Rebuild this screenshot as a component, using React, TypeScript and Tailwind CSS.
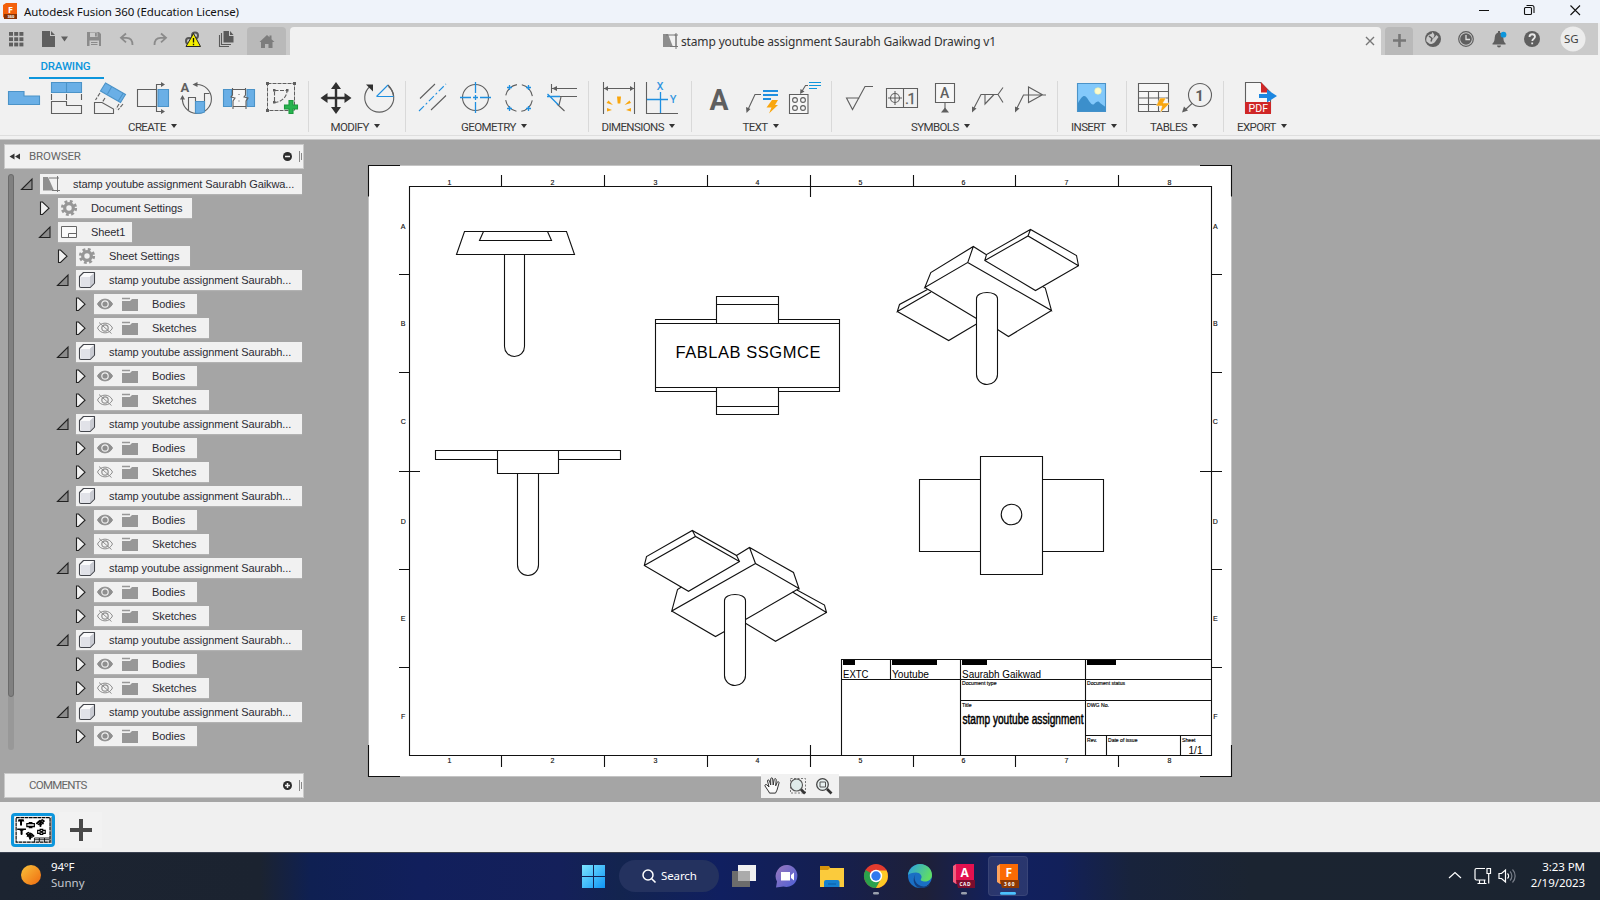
import type { ReactNode } from "react";

const K = "#5f5f5f";
const B = "#1f8fe0";
const FILL = "#6aafe6";
const EDGE = "#4b93c8";

/* Generic drawing cell; coordinates are in window space. */
function Cell({ vb, className, children }: { vb: string; className: string; children: ReactNode }) {
  return (
    <svg viewBox={vb} className={`shrink-0 ${className}`} fill="none">
      {children}
    </svg>
  );
}

function Tool({ x, children }: { x: number; children: ReactNode }) {
  return (
    <svg viewBox={`${x} 80 43 36`} className="h-9 w-[43px] shrink-0" fill="none" stroke={K} strokeWidth="1.1">
      {children}
    </svg>
  );
}

function Group({ className, row, label, name, children }: { className: string; row: string; label: string; name: string; children: ReactNode }) {
  return (
    <div className={`h-full shrink-0 ${className}`}>
      <div className={`flex ${row}`}>{children}</div>
      <div className={`mt-[4px] flex items-center gap-[5px] ${label}`}>
        <span className="text-[11.5px] leading-[14px] tracking-[-0.6px] whitespace-nowrap text-[#3a3a3a]">{name}</span>
        <Cell vb="0 0 6 4" className="h-1 w-1.5 -mt-0.5">
          <path d="M0 0h6L3 4z" fill="#333" />
        </Cell>
      </div>
    </div>
  );
}

function Sep() {
  return <div className="-mx-[0.5px] mt-[1px] h-[51px] w-px shrink-0 bg-[#d9d9d9]" />;
}

function TitleBar() {
  return (
    <header className="flex h-[23px] items-center bg-[#eff3fa]">
      <Cell vb="0 0 24 23" className="h-[23px] w-6">
        <path d="M3 5l3-2h11v16H6l-3-2z" fill="#f3600c" />
        <path d="M4 14h13v5H4z" fill="#8a3205" />
        <text x="8" y="12.5" fontSize="9" fontWeight="700" fill="#fff" fontFamily="Open Sans, sans-serif">F</text>
        <text x="7.5" y="18" fontSize="4" fontWeight="700" fill="#fff" fontFamily="Open Sans, sans-serif">360</text>
      </Cell>
      <span className="font-['Noto_Sans',sans-serif] text-[11.5px] tracking-[-0.1px] text-[#111]">Autodesk Fusion 360 (Education License)</span>
      <Cell vb="1470 0 130 23" className="ml-auto h-[23px] w-[130px]">
        <g stroke="#111" strokeWidth="1.1">
          <path d="M1479 10.5h10M1570.5 5.5l9.500 9.500M1580 5.500l-9.500 9.500" />
          <rect x="1524.500" y="7.500" width="7" height="7" rx="1" />
          <path d="M1526.500 5.500h5.500a2 2 0 0 1 2 2v5.500" />
        </g>
      </Cell>
    </header>
  );
}

function TabBar() {
  return (
    <div className="flex h-8 bg-[#cacaca]">
      <Cell vb="0 23 33 32" className="h-8 w-[33px]">
        {[32, 37.3, 42.600].map((y) => [9, 14.200, 19.400].map((x) => <rect key={`${x}-${y}`} x={x} y={y} width="4" height="3.800" fill="#5f5f5f" />))}
      </Cell>
      <Cell vb="33 23 39 32" className="h-8 w-[39px]">
        <path d="M42 31h8v5h5v11H42zM51 31l4 4h-4z" fill="#5f5f5f" />
        <path d="M61 36.500h7l-3.500 5z" fill="#5f5f5f" />
      </Cell>
      <Cell vb="72 23 39 32" className="h-8 w-[39px]">
        <path d="M87 32h12l2 2v12H87z" fill="#8b8b8b" />
        <path d="M90 32.500h7.500v4.500H90zM89.500 40.500h9.500v5.500h-9.500z" fill="#cacaca" />
        <path d="M95 33h1.800v3.500H95zM91 42h6.500v1H91zM91 44h6.500v1H91z" fill="#8b8b8b" />
      </Cell>
      <Cell vb="111 23 32 32" className="h-8 w-8">
        <path d="M126 33.500l-5 4.300 5 4.500M121.500 37.800h5c3.500 0 6 2.500 6 7.200" stroke="#8b8b8b" strokeWidth="1.800" />
      </Cell>
      <Cell vb="143 23 34 32" className="h-8 w-[34px]">
        <path d="M161 33.500l5 4.300-5 4.500M165.500 37.800h-5c-3.500 0-6 2.500-6 7.200" stroke="#8b8b8b" strokeWidth="1.800" />
      </Cell>
      <Cell vb="177 23 32 32" className="h-8 w-8">
        <circle cx="195" cy="35.500" r="3" stroke="#555" strokeWidth="2" />
        <circle cx="189" cy="41" r="3" stroke="#555" strokeWidth="2" />
        <path d="M193.500 33.500l7 13h-14.500z" fill="#f4ee00" stroke="#222" strokeWidth="1" />
        <path d="M193.500 38v4.500M193.500 43.800v1.400" stroke="#111" strokeWidth="1.300" />
      </Cell>
      <Cell vb="209 23 38 32" className="h-8 w-[38px]">
        <path d="M223.500 31h5.500v5h4.500v6.500h-10zM230 31l3.500 4H230z" fill="#5a5a5a" />
        <path d="M221.500 33v11.500h9.500M219.500 35v11.500h9.500" stroke="#5a5a5a" strokeWidth="1.100" />
      </Cell>
      <div className="mt-1 flex h-7 w-[39px] shrink-0 items-center rounded-t bg-[#b9b9b9]">
        <Cell vb="247 27 39 28" className="h-7 w-[39px]">
          <path d="M259.500 42l7.500-7 2.500 2.300V35.500h2v3.700l3 2.800h-2v6h-4v-4h-3.500v4h-4v-6z" fill="#7d7d7d" />
        </Cell>
      </div>
      <div className="mt-1 ml-1 flex h-7 w-[1091px] shrink-0 items-center rounded-t bg-[#f1f1f1]">
        <div className="w-[372px] shrink-0" />
        <Cell vb="0 0 18 18" className="h-[18px] w-[18px]">
          <path d="M1 2h5l5 13H1z" fill="#8e8e8e" />
          <path d="M4 3h10v11M8 14.500h8M14 1v16M12.500 3H16" stroke="#777" />
        </Cell>
        <span className="ml-px pt-0.5 font-['Noto_Sans',sans-serif] text-[12px] tracking-[-0.15px] whitespace-nowrap text-[#333]">stamp youtube assignment Saurabh Gaikwad Drawing v1</span>
        <Cell vb="1360 31 21 20" className="ml-auto h-5 w-[21px]">
          <path d="M1366 37l8 8M1374 37l-8 8" stroke="#777" strokeWidth="1.400" />
        </Cell>
      </div>
      <div className="mt-1 ml-1 flex h-7 w-7 shrink-0 rounded-t bg-[#b9b9b9]">
        <Cell vb="1385 27 28 28" className="h-7 w-7">
          <path d="M1393 40.500h13M1399.500 34v13" stroke="#777" strokeWidth="2.600" />
        </Cell>
      </div>
      <Cell vb="1413 23 187 32" className="h-8 w-[187px]">
        <circle cx="1433" cy="39" r="8" fill="#5f5f5f" />
        <path d="M1426.500 41.500c-1-4 1.500-7 5-7.500l1-2 2 3-1.500 4 3.500-4 2 2-3.500 5c-2.500 2.500-5.500 2.500-6.500 1z" fill="#cacaca" />
        <path d="M1429 36l3 2.500-1 3" stroke="#5f5f5f" strokeWidth="1.500" />
        <circle cx="1466" cy="39" r="7.300" stroke="#5f5f5f" strokeWidth="1.200" />
        <circle cx="1466" cy="39" r="5.800" fill="#5f5f5f" />
        <path d="M1466 35v4.500h4" stroke="#ddd" strokeWidth="1.300" />
        <path d="M1492.500 43.500c2-1.500 2-3.500 2.300-6.500.3-3 2-4.500 4.200-4.500s4 1.500 4.300 4.500c.2 3 .3 5 2.300 6.500v1h-13.100zM1497 45.500h4a2 2 0 0 1-4 0zM1498 31h2v2h-2z" fill="#5f5f5f" />
        <circle cx="1503.500" cy="34.700" r="2.900" fill="#0d96dc" />
        <circle cx="1532" cy="39" r="8" fill="#5f5f5f" />
        <path d="M1529.500 37c0-3.800 5.500-3.500 5.500-.3 0 2-2.700 2-2.700 4.300M1532.200 42.500v1.800" stroke="#e8e8e8" strokeWidth="1.800" />
        <circle cx="1573" cy="39" r="12.500" fill="#ececec" />
        <text x="1564" y="43.200" fontSize="11.500" textLength="14.500" fill="#444" fontFamily="Noto Sans, sans-serif">SG</text>
        <path d="M1599 23v32" stroke="#efefef" strokeWidth="2" />
      </Cell>
    </div>
  );
}

function Ribbon() {
  return (
    <nav className="h-[85px] border-b border-[#c8c8c8] bg-[#f1f1f1] font-[Roboto,sans-serif]">
      <div className="flex h-[25px] pl-[29px]">
        <div className="h-[24px] w-[75px] border-b-[2.500px] border-[#0d96dc] pt-[4px] pr-[2px] text-center text-[11.500px] leading-[14px] font-medium tracking-[-0.200px] text-[#0d96dc]">DRAWING</div>
      </div>
      <div className="flex h-[56px] border-b border-[#dedede]">
        <Group className="w-[308px]" row="pl-0.5" label="pl-[128px]" name="CREATE">
          <Tool x={2}>
            <path d="M8.500 91.500H24v4.500h15.500v8.500h-31z" fill={FILL} stroke={EDGE} />
          </Tool>
          <Tool x={45}>
            <path d="M51.500 82.500h30v10h-30zM66.500 82.500v10" fill={FILL} stroke={EDGE} />
            <path d="M51.500 94v6M66.500 94v6M81.500 94v6" />
            <path d="M51.500 101.500h15v4h15v8h-30z" />
          </Tool>
          <Tool x={88}>
            <path d="M105.500 83l20 11.500-5 8-20-11.500zM111.500 87l-4 7M123 93.500l-5 8" fill={FILL} stroke={EDGE} />
            <path d="M94.500 102.500h7.500l11.500 6.500v4.500h-19z" />
            <path d="M100 93l-4.500 7M105 98l-2.500 4M119 104l-3 5M123 104l-5 6" strokeDasharray="4 1.500" />
          </Tool>
          <Tool x={131}>
            <path d="M158 89.500h10.500v17H158z" fill={FILL} stroke={EDGE} />
            <path d="M156 89.500h-18.500v17H156M161 84.500h-4.500v27h4.500" />
            <path d="M161 82l4 2.500-4 2.500zM161 109l4 2.500-4 2.500z" fill={K} stroke="none" />
          </Tool>
          <Tool x={174}>
            <text x="180.500" y="91.500" fontSize="13" fontWeight="700" fill={K} stroke="none" fontFamily="Roboto, sans-serif">A</text>
            <path d="M196 84.500a14.500 14.500 0 1 1-13.500 13" />
            <path d="M197.500 82l-5 2.500 5 2.500zM180 99.500l2.500-4.500 2.500 4.500z" fill={K} stroke="none" />
            <path d="M188.500 110v-12.500h7v15M204.500 111V93.500h5" />
            <path d="M195.500 101.500h9V112c-3 1.500-6 1.500-9 1z" fill={FILL} stroke={EDGE} />
          </Tool>
          <Tool x={217}>
            <path d="M223.500 89.500h8v17h-8zM247 89.500h7.500v17H247z" fill={FILL} stroke={EDGE} />
            <path d="M232 89h14v18h-14z" fill="#f7f7f7" stroke="none" />
            <path d="M232.500 88v7l-1.500 2 4 1-2 3v8M245.500 88v7l-1.500 2 4 1-2 3v8M232.500 89.500h13M232.500 106.500h13" />
            <path d="M238.500 94.500h1M238.500 101h1" />
          </Tool>
          <Tool x={260}>
            <path d="M267.500 83.500h27v27h-27z" strokeDasharray="4 1" strokeWidth="1" />
            <path d="M266 82h3v3h-3zM293 82h3v3h-3zM266 109h3v3h-3zM273 89h2.500v2.500H273zM286 89h2.500v2.500H286zM273 101h2.500v2.500H273z" fill={K} stroke="none" />
            <path d="M274.500 90.500H287c0 7-6 11.500-12.500 12z" strokeDasharray="4 1.500" />
            <path d="M289 100.500h4v4.500h4.500v4H293v4.500h-4V109h-4.500v-4h4.500z" fill="#27b34f" stroke="#1b9a3d" />
          </Tool>
        </Group>
        <Sep />
        <Group className="w-[97px]" row="pl-[7px]" label="pl-[22.500px]" name="MODIFY">
          <Tool x={315}>
            <path d="M336 87v22M325 98h22" stroke="#303030" strokeWidth="2.400" />
            <path d="M336 82l5 7h-10zM336 114l5-7h-10zM320.500 98l7-5v10zM351.500 98l-7-5v10z" fill="#303030" stroke="none" />
          </Tool>
          <Tool x={358}>
            <path d="M388.500 86.500a14.500 14.500 0 1 1-18.500 0" />
            <path d="M366 84.500h7v7z" fill="#303030" stroke="none" />
            <path d="M376.500 96.500l11.500-11.500M376.500 96.500h17" stroke={B} />
            <path d="M388 85c3 3 5 7 5.500 11" />
          </Tool>
        </Group>
        <Sep />
        <Group className="w-[183px]" row="pl-[6px]" label="pl-[56px]" name="GEOMETRY">
          <Tool x={411}>
            <path d="M420 98.500l15-14.500M431 110l15-14.500" />
            <path d="M419 111l27-27" stroke={B} strokeDasharray="7 2.500 2 2.500" />
          </Tool>
          <Tool x={454}>
            <circle cx="475.500" cy="97.500" r="13" />
            <path d="M460 97.500h11M480 97.500h11M475.500 82v11M475.500 102v11M473 97.500h5M475.500 95v5" stroke={B} strokeWidth="1.300" />
          </Tool>
          <Tool x={497}>
            <circle cx="519" cy="98" r="13.500" strokeDasharray="16.200 5" strokeDashoffset="-2.500" />
            <path d="M507 87.500h5M509.500 85v5M526 87.500h5M528.500 85v5M507 108.500h5M509.500 106v5M526 108.500h5M528.500 106v5" stroke={B} strokeWidth="1.300" />
          </Tool>
          <Tool x={540}>
            <path d="M551.500 84v9M552 88.500h25M560 96.500h17M557 104l7.500 7M561 97l-2 8" />
            <path d="M552 88.500l5-2.500v5z" fill={K} stroke="none" />
            <path d="M547 96.500h13M547.500 94l11 11" stroke={B} strokeWidth="1.300" />
          </Tool>
        </Group>
        <Sep />
        <Group className="w-[103px]" row="pl-[9px]" label="pl-[13.500px]" name="DIMENSIONS">
          <Tool x={597}>
            <path d="M603.500 82v32M634.500 82v32M604 88.500h30" />
            <path d="M604 88.500l4-2.500v5zM634 88.500l-4-2.500v5z" fill={K} stroke="none" />
            <path d="M617.700 104l-.7-7h4l-.7 7zM613 105.500l-4.500-4.500-2 2.500zM624.500 105.500l5-4.500 1.500 2.500zM612 110.500l-5-2v3.500zM626 110.500l5-2v3.500z" fill="#f9a60e" stroke="none" transform="translate(0 -.5)" />
          </Tool>
          <Tool x={640}>
            <path d="M646.500 82v31.500h31.500" />
            <path d="M660.500 92v21M647 99.500h21" stroke={B} strokeWidth="1.300" />
            <text x="656.800" y="89.500" fontSize="10.500" fill={B} stroke={B} strokeWidth=".2" fontFamily="Roboto, sans-serif">X</text>
            <text x="670" y="103" fontSize="10.500" fill={B} stroke={B} strokeWidth=".2" fontFamily="Roboto, sans-serif">Y</text>
          </Tool>
        </Group>
        <Sep />
        <Group className="w-[140px]" row="pl-[6px]" label="pl-[51.500px]" name="TEXT">
          <Tool x={697}>
            <text x="709.500" y="109.500" fontSize="30" fontWeight="700" textLength="19" lengthAdjust="spacingAndGlyphs" fill={K} stroke="none" fontFamily="Roboto, sans-serif">A</text>
          </Tool>
          <Tool x={740}>
            <path d="M761 94.500h-6l-7 15" />
            <path d="M746.500 113l-.5-6 4.500 2z" fill={K} stroke="none" />
            <path d="M763 91h15M763 95h15M763 99h8" stroke={B} strokeWidth="1.800" />
            <path d="M772 100h6l-3 5h3l-9 8.500 2.500-6h-5z" fill="#f9a60e" stroke="none" />
          </Tool>
          <Tool x={783}>
            <path d="M789.500 94.500h18.500v19h-18.500z" fill="#f7f7f7" />
            <circle cx="795" cy="100" r="2.400" /><circle cx="803" cy="100" r="2.400" />
            <circle cx="795" cy="108" r="2.400" /><circle cx="803" cy="108" r="2.400" />
            <path d="M808 85.500h-2.500l-4 6.500" />
            <path d="M800 94l.5-5 4 2.500z" fill={K} stroke="none" />
            <path d="M809 82.500h12M809 85.500h12M809 88.500h8" stroke="#0d96dc" />
          </Tool>
        </Group>
        <Sep />
        <Group className="w-[226px]" row="pl-[6px]" label="pl-[80px]" name="SYMBOLS">
          <Tool x={837}>
            <path d="M873 86.500h-8l-12.500 23-6-11.500h13" />
          </Tool>
          <Tool x={880}>
            <path d="M886.500 88.500h31v19h-31zM903.500 88.500v19M888 98h14M895 91v14" />
            <circle cx="895" cy="98" r="4.500" />
            <text x="905" y="104" fontSize="15" textLength="11" fill={K} stroke={K} strokeWidth=".3" fontFamily="Roboto, sans-serif">.1</text>
          </Tool>
          <Tool x={923}>
            <path d="M935.500 83.500h19v19h-19zM945 103v6" fill="#f7f7f7" />
            <text x="940" y="98" fontSize="14" fontWeight="500" fill={K} stroke="none" fontFamily="Roboto, sans-serif">A</text>
            <path d="M941 112.500l4-5 4 5z" fill={K} stroke="none" />
          </Tool>
          <Tool x={966}>
            <path d="M974 108l7-13.500h17l5-7M998 94.500l5 8M985 94.500v9.500l9-9.500" />
            <path d="M972 112.500v-6l4.500 2z" fill={K} stroke="none" />
          </Tool>
          <Tool x={1009}>
            <path d="M1017 108l6.500-13h22.500M1028.500 87v15.500l14-7.700z" />
            <path d="M1015 112.500v-6l4.500 2z" fill={K} stroke="none" />
          </Tool>
        </Group>
        <Sep />
        <Group className="w-[69px]" row="pl-[13px]" label="pl-[14px]" name="INSERT">
          <Tool x={1070}>
            <path d="M1077.500 83.500h28v28h-28z" fill="#83c9fb" stroke={EDGE} />
            <path d="M1078 103c5-9 7-9 11-2 2 3 4 5 6 2 2-2 4-2 5 0l5.500 4v4.500H1078z" fill="#3c8fcb" stroke="none" />
            <circle cx="1098" cy="91" r="3.300" fill="#fdfbcb" stroke="#e8eeb0" strokeWidth=".6" />
          </Tool>
        </Group>
        <Sep />
        <Group className="w-[97px]" row="pl-[6px]" label="pl-[24px]" name="TABLES">
          <Tool x={1132}>
            <path d="M1138.500 83.500h30v28h-30zM1138.500 91.500h30M1138.500 98h30M1138.500 104.500h30M1148.500 91.500v20M1158.500 91.500v20" fill="#f7f7f7" />
            <path d="M1160 98h6l-3 5h7l-10 10 2-7h-6z" fill="#f9a60e" stroke="#f1f1f1" strokeWidth=".5" />
          </Tool>
          <Tool x={1175}>
            <circle cx="1200" cy="95" r="11.500" />
            <path d="M1192 103.500l-7 6.500" />
            <path d="M1182 112.500l2-6 4 4z" fill={K} stroke="none" />
            <text x="1195.300" y="100.500" fontSize="15" fontWeight="700" fill={K} stroke="none" fontFamily="Roboto, sans-serif">1</text>
          </Tool>
        </Group>
        <Sep />
        <Group className="w-[100px]" row="pl-[15px]" label="pl-[14px]" name="EXPORT">
          <Tool x={1238}>
            <path d="M1245.500 82.500h15l10 10v20h-25z" fill="#f7f7f7" />
            <path d="M1261 82l9.500 10.500H1261z" fill="#cf2626" stroke="none" />
            <path d="M1245 102h26v12h-26z" fill="#cf2626" stroke="none" />
            <path d="M1259 94h8v-4.500l10 6.500-10 6.500v-4.500h-8z" fill="#1c86e0" stroke="none" />
            <text x="1248.500" y="112" fontSize="10.500" textLength="19.500" lengthAdjust="spacingAndGlyphs" fill="#fff" stroke="none" fontFamily="Roboto, sans-serif">PDF</text>
          </Tool>
        </Group>
      </div>
    </nav>
  );
}

type Kind = "root" | "gear" | "sheet" | "cube" | "eye" | "hidden";
type Row = { text: string; kind: Kind; open?: boolean; indent: string; width: string };

const component: Row = { text: "stamp youtube assignment Saurabh...", kind: "cube", open: true, indent: "pl-[56px]", width: "w-[226px]" };
const bodies: Row = { text: "Bodies", kind: "eye", indent: "pl-[74px]", width: "w-[103px]" };
const sketches: Row = { text: "Sketches", kind: "hidden", indent: "pl-[74px]", width: "w-[115px]" };

const rows: Row[] = [
  { text: "stamp youtube assignment Saurabh Gaikwa...", kind: "root", open: true, indent: "pl-[20px]", width: "w-[262px]" },
  { text: "Document Settings", kind: "gear", indent: "pl-[38px]", width: "w-[134px]" },
  { text: "Sheet1", kind: "sheet", open: true, indent: "pl-[38px]", width: "w-[74px]" },
  { text: "Sheet Settings", kind: "gear", indent: "pl-[56px]", width: "w-[114px]" },
  ...Array.from({ length: 6 }, () => [component, bodies, sketches]).flat(),
  component,
  bodies,
];

function NodeIcon({ kind }: { kind: Kind }) {
  if (kind === "eye" || kind === "hidden") {
    const off = kind === "hidden";
    return (
      <Cell vb="0 0 58 20" className="h-5 w-[58px]">
        <path d="M3.500 10C6.500 3.500 15.500 3.500 18.500 10 15.500 16.500 6.500 16.500 3.500 10z" fill={off ? "none" : "#8f8f8f"} stroke="#8f8f8f" />
        <circle cx="11" cy="10" r="3.200" stroke={off ? "#8f8f8f" : "#f1f1f1"} strokeWidth="1.200" />
        {off && <path d="M5 4.500l12.500 11" stroke="#8f8f8f" />}
        <path d="M28 7h8l2-2h6v12H28z" fill="#979797" />
        <path d="M28 4.500h8" stroke="#979797" strokeWidth="1.500" />
      </Cell>
    );
  }
  return (
    <Cell vb="0 0 33 20" className="h-5 w-[33px]">
      {kind === "root" && (
        <>
          <path d="M3 3h5l6 13.500H3z" fill="#8f8f8f" />
          <path d="M9 4h10M17.500 2v16M12 16.500h8" stroke="#777" />
        </>
      )}
      {kind === "gear" && (
        <>
          <circle cx="11" cy="10" r="6.500" stroke="#979797" strokeWidth="3.200" strokeDasharray="2.700 2.405" />
          <circle cx="11" cy="10" r="4.300" stroke="#979797" strokeWidth="3.200" />
        </>
      )}
      {kind === "sheet" && (
        <>
          <path d="M3.500 4.500h15v11h-15z" fill="#fafafa" stroke="#666" />
          <path d="M10.500 15.500v-4h8" stroke="#666" />
        </>
      )}
      {kind === "cube" && (
        <>
          <path d="M3.500 6.500l4-4h11v10.500l-4.500 4.500h-9a1.500 1.500 0 0 1-1.500-1.500z" fill="#fbfbfc" stroke="#44464c" strokeWidth="1.100" strokeLinejoin="round" />
          <path d="M4.500 7h9.500v10H5z" fill="#e1e2e8" />
          <path d="M14 6.500v10.500l4-4V3z" fill="#c9cbd2" />
        </>
      )}
    </Cell>
  );
}

function PanelHeader({ title, open }: { title: string; open: boolean }) {
  return (
    <div className="flex h-[25px] w-[300px] items-center border border-[#c9c9c9] bg-[#f1f1f1]">
      <Cell vb="4 0 24 23" className="h-[23px] w-6">
        {open && <path d="M13.500 8.500v6l-5-3zM19 8.500v6l-5-3z" fill="#333" />}
      </Cell>
      <span className={`font-[Roboto,sans-serif] text-[11.500px] text-[#666] ${open ? "tracking-[-0.150px]" : "tracking-[-0.750px]"}`}>{title}</span>
      <Cell vb="279.500 0 24 23" className="ml-auto h-[23px] w-6">
        <circle cx="288" cy="11.500" r="4.500" fill="#2c2c2c" />
        <path d={open ? "M285.500 11.500h5" : "M285.500 11.500h5M288 9v5"} stroke="#f1f1f1" strokeWidth="1.500" />
        <path d="M300 6v11M302 8v7" stroke="#888" />
      </Cell>
    </div>
  );
}

function Browser() {
  return (
    <aside className="flex w-[304px] shrink-0 flex-col pt-1 pl-1">
      <PanelHeader title="BROWSER" open />
      <div className="mt-[5px] -ml-1 flex h-[576px]">
        <div className="ml-2 h-[576px] w-1.5 shrink-0 rounded-full bg-[#989898]">
          <div className="h-[523px] rounded-full border border-[#6b6b6b] bg-[#808080]" />
        </div>
        <ul className="-ml-[14px] flex w-[304px] shrink-0 flex-col gap-1">
          {rows.map((r, i) => (
            <li key={i} className={`flex h-5 shrink-0 items-center ${r.indent}`}>
              <Cell vb="0 0 20 20" className="h-5 w-5">
                {r.open ? (
                  <path d="M1.500 15.500l10.500-10.500v10.500z" fill="#8c8c8c" stroke="#222" strokeWidth="1.100" />
                ) : (
                  <path d="M2.500 4v12.500h2l6.500-6.300L4.500 4z" fill="#f1f1f1" stroke="#222" strokeWidth="1.100" />
                )}
              </Cell>
              <div className={`flex h-5 items-center bg-[#f1f1f1] shadow-[0_1px_1px_rgba(255,255,255,0.15)] ${r.width}`}>
                <NodeIcon kind={r.kind} />
                <span className="font-['Liberation_Sans',sans-serif] text-[11px] tracking-[-0.090px] whitespace-nowrap text-[#2c2c34]">{r.text}</span>
              </div>
            </li>
          ))}
        </ul>
      </div>
      <div className="mt-[23px]">
        <PanelHeader title="COMMENTS" open={false} />
      </div>
    </aside>
  );
}

/* Line work of the sheet, reused by the thumbnail. */
function Views() {
  return (
    <g>
      <path d="M464.500 231.500h102l8 23h-118zM483.500 231.500l-4 9h72l-4-9M504.500 254.500v92a10 10 0 0 0 20 0v-92" />
      <path d="M716.500 319.500v-23h62v23M716.500 304.500h62M716.500 319.500h-61v72h61M778.500 319.500h61v72h-61M655.500 323.500h184M655.500 387.500h184M716.500 319.500v4M778.500 319.500v4M716.500 387.500v27h62v-27M716.500 406.500h62" />
      <path d="M497.500 450.500h-62v9h62M558.500 459.500h62v-9h-62M497.500 450.500h61v23h-61zM517.500 473.500v91.500a10.500 10.500 0 0 0 21 0v-91.500" />
      <path d="M980.500 456.500h62v118h-62zM980.500 479.500h-61v72h61M1042.500 479.500h61v72h-61" />
      <circle cx="1011.500" cy="514.500" r="10.300" />
      <path d="M986 254.500l-12.700-8-42.500 26-6 15 43-25 5.500-16M967.700 262.500l83.800 48-6.200-22.500-2.800-1.500M1051.500 310.500l-43 26-11-7M924.800 287.500l51.700 31" />
      <path d="M984.800 260.500l1.700-6 44-25 46 26 2 10.200-43 24.800zl43.200-24.500 50.500 29.700M1028 236l2.500-6.500" />
      <path d="M927.500 289.500l-28 15-2.200 7 33.700-19.500M897.300 311.500l51.400 29 27.800-16.500" />
      <path d="M976.500 374.500v-76c0-8 21-8 21 0v76a10.500 10 0 0 1-21 0z" />
      <path d="M644.300 565.500l2.200-9 45.800-26 44.200 25 3 6-51 29.800zl51.200-29 44 25M695.500 536.500l-3.200-6" />
      <path d="M736.500 555.500l13-8 44 25 5.500 16-43.500-25-6-16M755.500 563.500l-83.800 47.500 5.800-21.500 4-2.500M671.700 611l43.800 25.500 9-5M799 588.500l-53.500 31" />
      <path d="M797 590l27.500 15 2 7.500-51 28.800-30-18M792.500 592l34 20.500" />
      <path d="M724.500 675.500v-75c0-8 21-8 21 0v75a10.500 10 0 0 1-21 0z" />
    </g>
  );
}

const cols = [449.500, 552.500, 655.500, 757.500, 860.500, 963.500, 1066.500, 1169.500];
const bands: [string, number][] = [["A", 226.500], ["B", 323.500], ["C", 421.500], ["D", 521.500], ["E", 618.500], ["F", 716.500]];
const small: [string, number, number, number][] = [
  ["Document type", 962, 685.200, 34.500],
  ["Document status", 1087, 685.200, 38],
  ["Title", 962, 707.200, 9.500],
  ["DWG No.", 1087, 707.200, 22],
  ["Rev.", 1087, 742.200, 10],
  ["Date of issue", 1108, 742.200, 29.500],
  ["Sheet", 1182, 742.200, 13.500],
];
const fields: [string, number, number, number][] = [
  ["EXTC", 843, 677.800, 25.500],
  ["Youtube", 892, 677.800, 37],
  ["Saurabh Gaikwad", 962, 677.800, 79],
  ["1/1", 1188.500, 753.800, 14],
];

function Sheet() {
  return (
    <svg viewBox="367 164 866 614" className="h-[614px] w-[866px] shrink-0" fill="none" stroke="#111" strokeWidth="1.100" fontFamily="Liberation Sans, sans-serif">
      <path d="M368.500 165.500h863v611h-863z" fill="#fff" stroke="#bbb" strokeWidth=".6" />
      <path d="M400 165.500h-31.500v31M1200 165.500h31.500v31M400 776.500h-31.500v-31.500M1200 776.500h31.500v-31.500" />
      <path d="M409.500 186.500h802v569h-802z" />
      <path d="M501.500 175v11M604.500 175v11M707.500 175v11M810.500 175v22M913.500 175v11M1015.500 175v11M1118.500 175v11M501.500 756v11M604.500 756v11M707.500 756v11M810.500 745v22M913.500 756v11M1015.500 756v11M1118.500 756v11" />
      <path d="M399 274.500h10M399 372.500h10M399 471.500h21M399 569.500h10M399 667.500h10M1212 274.500h10M1212 372.500h10M1200 471.500h22M1212 569.500h10M1212 667.500h10" />
      <g fill="#111" stroke="#111" strokeWidth=".15" fontSize="7" textAnchor="middle">
        {cols.map((x, i) => (
          <g key={x}>
            <text x={x} y="185">{i + 1}</text>
            <text x={x} y="763">{i + 1}</text>
          </g>
        ))}
        {bands.map(([c, y]) => (
          <g key={c}>
            <text x="403.200" y={y + 2.500}>{c}</text>
            <text x="1215.300" y={y + 2.500}>{c}</text>
          </g>
        ))}
      </g>
      <Views />
      <text x="675.500" y="358" fontSize="16.500" textLength="145" fill="#000" stroke="none">FABLAB SSGMCE</text>
      <path d="M841.500 755.500v-96h370M841.500 679.500h370M960.500 700.500h251M1085.500 735.500h126M890.500 659.500v20M960.500 659.500v96M1085.500 659.500v96M1106.500 735.500v20M1180.500 735.500v20" />
      <path d="M843 660h12v5h-12zM892 660h45v5h-45zM962 660h25v5h-25zM1087 660h29v5h-29z" fill="#000" stroke="none" />
      <g fill="#000" stroke="none">
        {fields.map(([t, x, y, w]) => (
          <text key={t} x={x} y={y} fontSize="10" textLength={w} lengthAdjust="spacingAndGlyphs">{t}</text>
        ))}
        {small.map(([t, x, y, w]) => (
          <text key={t} x={x} y={y} fontSize="5" textLength={w} lengthAdjust="spacingAndGlyphs" stroke="#000" strokeWidth=".15">{t}</text>
        ))}
        <text x="962.500" y="723.700" fontSize="14" textLength="121" lengthAdjust="spacingAndGlyphs" stroke="#000" strokeWidth=".5">stamp youtube assignment</text>
      </g>
    </svg>
  );
}

function NavTools() {
  return (
    <div className="relative -mt-1 ml-[394px] h-6 w-[78px] bg-[#f1f1f1]">
      <Cell vb="761 774 78 24" className="h-6 w-[78px]">
        <path d="M769 792l-4-6c-.5-1.500 1-2 2-1l2 2-1.500-6c0-1.500 1.500-1.500 2 0l1.200 4v-6c0-1.500 2-1.500 2 0l.5 6 1-5.500c.5-1.500 2-1 2 .3l-.5 6 1.500-3.500c.8-1.200 2.200-.5 1.800.8l-2 7-1.500 3h-6z" fill="#fafafa" stroke="#333" strokeWidth="1" />
        <path d="M790.500 778.500h15v14.500h-15z" stroke="#777" strokeDasharray="2 1.500" />
        <circle cx="796.500" cy="785" r="6" fill="#dfeceb" stroke="#555" strokeWidth="1.100" />
        <path d="M801 789.500l4 4" stroke="#333" strokeWidth="2.600" />
        <circle cx="822.500" cy="784.500" r="5.800" fill="#e8f0f0" stroke="#444" strokeWidth="1.300" />
        <path d="M820 782h5.500v5h-5.500z" stroke="#555" />
        <path d="M827 789l4.500 4.500" stroke="#333" strokeWidth="2.600" />
      </Cell>
    </div>
  );
}

function SheetStrip() {
  return (
    <div className="flex h-[50px] items-center bg-[#f0f0f0] pt-[6px] pl-[11px]">
      <div className="flex h-[34px] w-11 items-center justify-center rounded-sm border-[3px] border-[#0d96dc] bg-[#ececec]">
        <svg viewBox="368 165 900 612" preserveAspectRatio="none" className="h-[26px] w-[37px] bg-[#9a9a9a]" fill="none" stroke="#000" strokeWidth="28">
          <path d="M368 165h864v612H368z" fill="#fff" stroke="none" />
          <path d="M395 180h825v578H395z" strokeDasharray="90 14" />
          <Views />
          <path d="M841 755v-96h370M841 700h370M960 660v95M1085 660v95" strokeWidth="20" />
        </svg>
      </div>
      <div className="ml-1 flex h-9 w-[43px] items-center justify-center bg-[#f2f2f2]">
        <Cell vb="0 0 22 22" className="h-[22px] w-[22px]">
          <path d="M0 11h22M11 0v22" stroke="#484848" strokeWidth="4" />
        </Cell>
      </div>
    </div>
  );
}

function Task({ x, active, children }: { x: number; active?: boolean; children: ReactNode }) {
  return (
    <div className="flex h-12 w-11 shrink-0 items-center justify-center">
      <div className={`flex h-10 w-10 items-center justify-center rounded ${active ? "bg-white/10 shadow-[inset_0_0_0_1px_rgba(255,255,255,0.07)]" : ""}`}>
        <svg viewBox={`${x + 2} 856 40 40`} className="h-10 w-10 shrink-0" fill="none">{children}</svg>
      </div>
    </div>
  );
}

function Taskbar() {
  return (
    <footer className="flex h-12 items-center bg-[linear-gradient(90deg,#1c2431_0px,#1b2330_260px,#0f2052_310px,#111f5c_420px,#14205a_560px,#13244f_620px,#101f60_720px,#141f52_820px,#1e2038_925px,#112060_1000px,#12205a_1060px,#18233c_1130px,#1b2431_1250px,#1b2430_1600px)] font-['Noto_Sans',sans-serif] text-white shadow-[inset_0_1px_0_#3a4150]">
      <Cell vb="0 852 51 48" className="h-12 w-[51px]">
        <defs>
          <linearGradient id="sun" x1="0" y1="0" x2="1" y2="1">
            <stop offset="0" stopColor="#f9c33a" />
            <stop offset="1" stopColor="#ef6a10" />
          </linearGradient>
        </defs>
        <circle cx="31" cy="875" r="10" fill="url(#sun)" />
      </Cell>
      <div className="w-[521px] shrink-0 pb-0.5 text-[11.500px] leading-4">
        <div className="tracking-[-0.200px]">94°F</div>
        <div className="text-[#c3c7ce]">Sunny</div>
      </div>
      <Task x={572}>
        <defs>
          <linearGradient id="win" x1="0" y1="0" x2="1" y2="1">
            <stop offset="0" stopColor="#7be4ff" />
            <stop offset="1" stopColor="#0f95f5" />
          </linearGradient>
          <linearGradient id="chat" x1="0" y1="0" x2="1" y2="1">
            <stop offset="0" stopColor="#9a78bd" />
            <stop offset="1" stopColor="#4b5fd6" />
          </linearGradient>
          <linearGradient id="edge" x1="0" y1="0" x2="1" y2="0.400">
            <stop offset="0" stopColor="#2b9fe6" />
            <stop offset="1" stopColor="#5fdc66" />
          </linearGradient>
        </defs>
        <path d="M582 865h11v11h-11zM594 865h11v11h-11zM582 877h11v11h-11zM594 877h11v11h-11z" fill="url(#win)" />
      </Task>
      <div className="mx-[3px] flex h-8 w-[100px] shrink-0 items-center rounded-full bg-[#24325f] pl-[22px]">
        <Cell vb="0 0 16 16" className="h-4 w-4">
          <circle cx="7" cy="7" r="5" stroke="#fff" strokeWidth="1.500" />
          <path d="M10.700 10.700l3.800 3.800" stroke="#fff" strokeWidth="1.600" />
        </Cell>
        <span className="ml-1 text-[11.500px] tracking-[-0.100px]">Search</span>
      </div>
      <Task x={722}>
        <path d="M738 865h18v16h-18z" fill="#f0f0f0" />
        <path d="M732 871h18v16h-18z" fill="#6c6c6c" />
        <path d="M738 871h12v10h-12z" fill="#ababab" />
      </Task>
      <Task x={766}>
        <path d="M788 865a11 11 0 1 1-4.500 21.500L776 887.500l1-6A11.300 11.300 0 0 1 788 865z" fill="url(#chat)" />
        <path d="M781 872h9v8.500h-9zM791 875l3-2.500v8l-3-2.500z" fill="#fff" />
      </Task>
      <Task x={810}>
        <path d="M820 866h9l2 3h6v6h-17z" fill="#d6930c" />
        <path d="M820 870h8l2-2h14v19h-24z" fill="#fbcb3c" />
        <path d="M824 887v-5a2 2 0 0 1 2-2h11.500a2 2 0 0 1 2 2v5z" fill="#1580cf" />
        <path d="M828 884h8" stroke="#0b5da5" />
      </Task>
      <Task x={854}>
        <circle cx="876" cy="876" r="12" fill="#e33b2e" />
        <path d="M876 876l-10.400-6A12 12 0 0 0 876 888l5-9z" fill="#2ba24c" />
        <path d="M876 870.500h10.600A12 12 0 0 1 876 888l5-9z" fill="#fdc925" />
        <circle cx="876" cy="876" r="6.200" fill="#fff" />
        <circle cx="876" cy="876" r="4.700" fill="#3079ee" />
        <rect x="873" y="892" width="6" height="2.600" rx="1.300" fill="#9aa0ad" />
      </Task>
      <Task x={898}>
        <circle cx="920" cy="876" r="12" fill="#1a6fc4" />
        <path d="M908 875c.5-6 6-11 12-11 7 0 12 5 12 11 0 4-3 6.500-7 6.500-3 0-5-1-4-2.500 2-3-1-6.500-5-6.500-3.500 0-7 1-8 2.500z" fill="url(#edge)" />
        <path d="M915.500 874c-3 5 1 12 8 12.500 3 0 5-.8 7-2.500-2 3-6 4.500-10 4-6-.5-9-8-5-14z" fill="#123f80" />
      </Task>
      <Task x={942}>
        <path d="M953 866l3-2v20l-3-2z" fill="#f0607f" />
        <path d="M956 864h18v20h-18z" fill="#e3114f" />
        <path d="M956 880h19v8h-17z" fill="#7b0d2d" />
        <text x="960.500" y="877" fontSize="12" fontWeight="700" fill="#fff" fontFamily="Open Sans, sans-serif">A</text>
        <text x="959.500" y="886" fontSize="4.800" fontWeight="700" textLength="11" fill="#fff" fontFamily="Open Sans, sans-serif">CAD</text>
        <rect x="961" y="892" width="6" height="2.600" rx="1.300" fill="#9aa0ad" />
      </Task>
      <Task x={986} active>
        <path d="M997 866l3-2v20l-3-2z" fill="#ffa35c" />
        <path d="M1000 864h18v20h-18z" fill="#fb6b05" />
        <path d="M1000 880h19v8h-17z" fill="#8d3803" />
        <text x="1005.500" y="877" fontSize="12" fontWeight="700" fill="#fff" fontFamily="Open Sans, sans-serif">F</text>
        <text x="1004" y="886" fontSize="4.800" fontWeight="700" textLength="10.500" fill="#fff" fontFamily="Open Sans, sans-serif">360</text>
        <rect x="1000" y="892" width="16" height="2.800" rx="1.400" fill="#4cc2ff" />
      </Task>
      <Cell vb="1440 852 84 48" className="ml-auto h-12 w-[84px]">
        <g stroke="#fff" strokeWidth="1.200">
          <path d="M1449 878l6-5.500 6 5.500" />
          <path d="M1485 868.500h-8.500a1.500 1.500 0 0 0-1.500 1.500v8.500a1.500 1.500 0 0 0 1.500 1.500h9M1479.500 880v3M1484.500 880v3M1477.500 883.500h9M1487 868.500h3.500v5h-3.500zM1488.700 873.500v10" />
          <path d="M1499 873.500h2.500l4-3.500v12l-4-3.500h-2.500z" />
          <path d="M1507.500 873.500c1.500 1.500 1.500 3.500 0 5" />
          <path d="M1510 871.500c2.500 2.500 2.500 6.500 0 9M1512.500 869.500c3.500 3.500 3.500 9.500 0 13" stroke="#777d88" />
        </g>
      </Cell>
      <div className="mr-[15px] w-[61px] pb-0.5 text-right text-[11.500px] leading-4 tracking-[-0.050px] whitespace-nowrap">
        <div>3:23 PM</div>
        <div>2/19/2023</div>
      </div>
    </footer>
  );
}

export default function App() {
  return (
    <div className="flex h-[900px] w-[1600px] flex-col overflow-hidden bg-[#a5a5a5]">
      <TitleBar />
      <TabBar />
      <Ribbon />
      <main className="flex h-[662px] shrink-0 overflow-hidden bg-[#a5a5a5]">
        <Browser />
        <section className="ml-[63px] flex flex-col pt-6">
          <Sheet />
          <NavTools />
        </section>
      </main>
      <SheetStrip />
      <Taskbar />
    </div>
  );
}
